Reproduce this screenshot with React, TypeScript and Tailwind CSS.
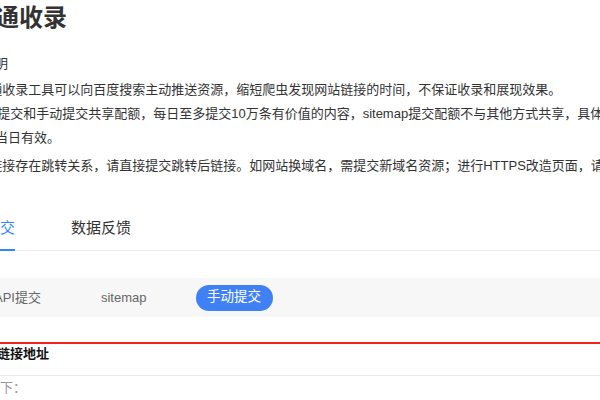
export default function App() {
  return (
    <div className="h-[400px] w-[600px] overflow-hidden bg-white font-['Liberation_Sans','Noto_Sans_CJK_SC',sans-serif] text-[#333]">
      <div className="-ml-[44px] w-[700px]">
        {/* Title */}
        <h1 className="ml-[15px] h-[36px] text-[24px] font-bold leading-[36px] text-[#333]">
          普通收录
        </h1>

        {/* Instructions */}
        <div className="mt-[16px] text-[13px] leading-[24px] text-[#333]">
          <p>使用说明</p>
          <p className="mt-[2px] whitespace-nowrap">
            1、普通收录工具可以向百度搜索主动推送资源，缩短爬虫发现网站链接的时间，不保证收录和展现效果。
          </p>
          <p className="whitespace-nowrap leading-[23.5px]">
            2、API提交和手动提交共享配额，每日至多提交10万条有价值的内容，sitemap提交配额不与其他方式共享，具体配额以站点页面显示数据为准。配额不可
            <br />
            <span>累计，当日有效。</span>
          </p>
          <p className="mt-[5px] whitespace-nowrap">
            3、若链接存在跳转关系，请直接提交跳转后链接。如网站换域名，需提交新域名资源；进行HTTPS改造页面，请提交HTTPS资源。
          </p>
        </div>

        {/* Tabs */}
        <div className="mt-[28px] flex h-[45px] gap-[56px] border-b border-[#eee] text-[15px]">
          <div className="-mb-px -ml-px border-b-2 border-[#3385ff] leading-[44px] text-[#3385ff]">
            资源提交
          </div>
          <div className="leading-[44px] text-[#333]">数据反馈</div>
        </div>

        {/* Sub tabs */}
        <div className="mt-[27px] flex h-[39px] items-center bg-[#f7f7f7] text-[13px] text-[#666]">
          <span className="ml-[38px]">API提交</span>
          <span className="ml-[60px]">sitemap</span>
          <span className="ml-[49px] flex h-[26px] w-[77px] items-center justify-center rounded-full bg-[#4080f5] text-[13.5px] text-white">
            手动提交
          </span>
        </div>

        {/* Red separator */}
        <div className="mt-[25px] h-[2px] bg-[#f5221b]" />

        {/* Form header */}
        <div className="h-[32px] border-b border-[#e8e8e8] pl-[41px] text-[13px] font-bold leading-[20px] text-[#111]">
          链接地址
        </div>

        <div className="pl-[31px] text-[13px] leading-[24px] text-[#999]">
          <p>如下：</p>
          <p className="pl-[77px]">www.example.com/1.html</p>
        </div>
      </div>
    </div>
  );
}
